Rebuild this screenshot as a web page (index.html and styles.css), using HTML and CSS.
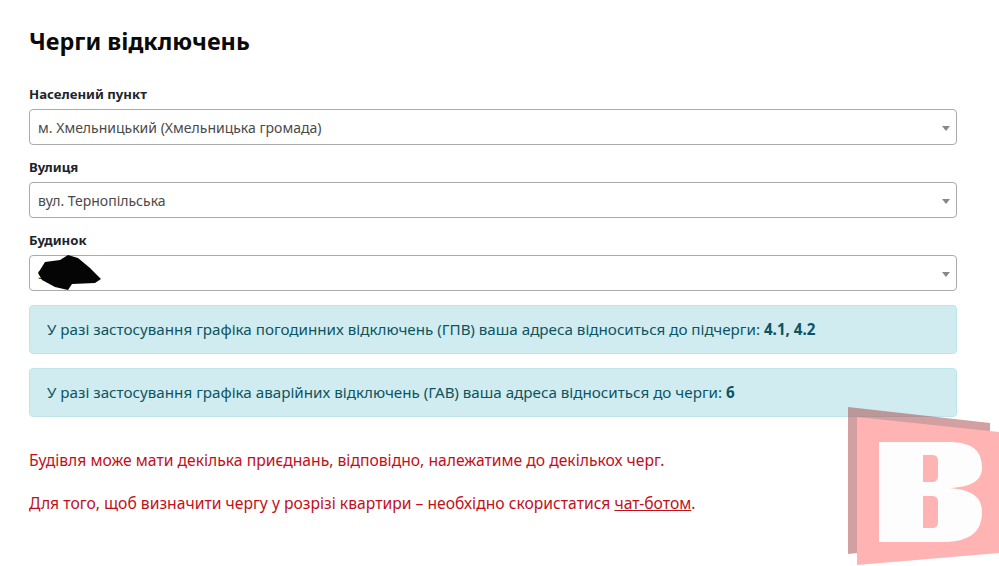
FILE: index.html
```html
<!DOCTYPE html>
<html lang="uk">
    <head>
        <meta charset="utf-8">
        <title>Черги відключень</title>
        <link rel="stylesheet" href="styles.css">
    </head>
    <body>
        <main class="page">
            <h1 class="title">Черги відключень</h1>

            <div class="field">
                <label class="label">Населений пункт</label>
                <div class="select"><span>м. Хмельницький (Хмельницька громада)</span><i class="arrow"></i></div>
            </div>
            <div class="field">
                <label class="label">Вулиця</label>
                <div class="select"><span>вул. Тернопільська</span><i class="arrow"></i></div>
            </div>
            <div class="field">
                <label class="label">Будинок</label>
                <div class="select">
                    <span>з</span><i class="arrow"></i>
                    <svg class="scribble" width="70" height="38" viewBox="0 0 70 38">
                        <path d="M4 16 L9 8 L24 6 L32 1 L42 4 L54 14 L65 25 L59 29 L36 30 L32 36 L19 33 L6 26 L2 19 Z" fill="#050505"/>
                    </svg>
                </div>
            </div>

            <div class="alerts">
                <div class="alert">У разі застосування графіка погодинних відключень (ГПВ) ваша адреса відноситься до підчерги: <b>4.1, 4.2</b></div>
                <div class="alert">У разі застосування графіка аварійних відключень (ГАВ) ваша адреса відноситься до черги: <b>6</b></div>
            </div>

            <p class="note first">Будівля може мати декілька приєднань, відповідно, належатиме до декількох черг.</p>
            <p class="note">Для того, щоб визначити чергу у розрізі квартири – необхідно скористатися <a href="#">чат-ботом</a>.</p>
        </main>

        <!-- watermark -->
        <svg class="mark" width="151" height="159" viewBox="848 407 151 159">
            <polygon points="848,407 990,423 990,540 848,554" fill="#a54141" fill-opacity="0.5"/>
            <polygon points="857,417 999,432 999,553 857,565" fill="#ffb3b3"/>
            <path fill-rule="evenodd" fill="#fdfdfd" d="M879 442 H948 C972 442 982 450 982 468 C982 480 972 487 950 488 C972 490 982 497 982 512 C982 532 970 542 942 542 H879 Z M923 455 V482 H932 C936 482 938 480 938 476 V461 C938 457 936 455 932 455 Z M923 496 V528 H932 C936 528 938 526 938 522 V502 C938 498 936 496 932 496 Z"/>
        </svg>
    </body>
</html>
```

FILE: styles.css
```css
body {
    margin: 0;
    background-color: white;
    font-family: "Noto Sans", "Open Sans", sans-serif;
    color: #212529;
}

.page {
    padding: 26px 42px 0 29px;
}

.title {
    margin: 0 0 28px;
    font-size: 23.4px;
    line-height: 30px;
    font-weight: 700;
    color: #0a0a0a;
}

.field {
    margin-bottom: 12px;
}

.label {
    display: block;
    margin-bottom: 5px;
    font-size: 13.2px;
    line-height: 20px;
    font-weight: 700;
}

.select {
    position: relative;
    display: flex;
    align-items: center;
    justify-content: space-between;
    box-sizing: border-box;
    height: 36px;
    padding: 0 6px 0 8px;
    border: 1px solid #aaa;
    border-radius: 4px;
    font-size: 14px;
    color: #4a4a4a;
}

.arrow {
    width: 0;
    height: 0;
    margin-top: 2px;
    border-left: 4px solid transparent;
    border-right: 4px solid transparent;
    border-top: 5px solid #888;
}

.scribble {
    position: absolute;
    left: 6px;
    top: -2px;
    filter: blur(0.6px);
}

.alerts {
    margin-top: 14px;
}

.alert {
    box-sizing: border-box;
    height: 49px;
    margin-bottom: 14px;
    padding: 0 17px;
    line-height: 47px;
    background-color: #d1ecf1;
    border: 1px solid #bee5eb;
    border-radius: 4px;
    font-size: 15.2px;
    color: #0c5460;
}

.note {
    margin: 0 0 22px;
    font-size: 15.7px;
    line-height: 21px;
    color: #c2101a;
}

.note.first {
    margin-top: 33px;
}

.note a {
    color: inherit;
}

.mark {
    position: absolute;
    left: 848px;
    top: 407px;
}
```
